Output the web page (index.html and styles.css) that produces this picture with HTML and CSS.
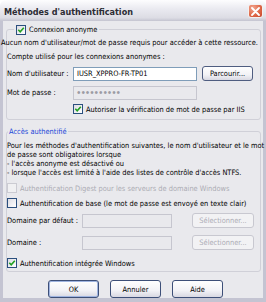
FILE: index.html
```html
<!DOCTYPE html>
<html lang="fr">
<head>
    <meta charset="UTF-8">
    <title>Méthodes d'authentification</title>
    <link rel="stylesheet" href="styles.css">
</head>
<body>
    <div class="window">
        <div class="titlebar">
            <span class="title">Méthodes d'authentification</span>
            <span class="close">
                <svg width="9" height="9" viewBox="0 0 9 9"><path d="M1 1L8 8M8 1L1 8" stroke="#fff" stroke-width="1.8" stroke-linecap="round"/></svg>
            </span>
        </div>
        <div class="client">
            <fieldset class="group anon">
                <legend>
                    <span class="box"><svg width="8" height="8" viewBox="0 0 8 8"><path d="M1.3 3.8L3.2 5.8L6.8 1.8" fill="none" stroke="#21a121" stroke-width="1.6"/></svg></span>
                    Connexion anonyme
                </legend>
                <div class="line wide">Aucun nom d'utilisateur/mot de passe requis pour accéder à cette ressource.</div>
                <div class="line">Compte utilisé pour les connexions anonymes :</div>
                <div class="row">
                    <span class="lbl">Nom d'utilisateur :</span>
                    <span class="field">IUSR_XPPRO-FR-TP01</span>
                    <span class="btn browse">Parcourir...</span>
                </div>
                <div class="row">
                    <span class="lbl">Mot de passe :</span>
                    <span class="field off"><span class="dots">••••••••••</span></span>
                </div>
                <div class="check iis">
                    <span class="box"><svg width="8" height="8" viewBox="0 0 8 8"><path d="M1.3 3.8L3.2 5.8L6.8 1.8" fill="none" stroke="#21a121" stroke-width="1.6"/></svg></span>
                    Autoriser la vérification de mot de passe par IIS
                </div>
            </fieldset>

            <fieldset class="group auth">
                <legend>Accès authentifié</legend>
                <p class="para">Pour les méthodes d'authentification suivantes, le nom d'utilisateur et le mot<br>
                de passe sont obligatoires lorsque<br>
                - l'accès anonyme est désactivé ou<br>
                - lorsque l'accès est limité à l'aide des listes de contrôle d'accès NTFS.</p>
                <div class="check digest disabled">
                    <span class="box"></span>
                    Authentification Digest pour les serveurs de domaine Windows
                </div>
                <div class="check basic">
                    <span class="box"></span>
                    Authentification de base (le mot de passe est envoyé en texte clair)
                </div>
                <div class="row domain first">
                    <span class="lbl">Domaine par défaut :</span>
                    <span class="field off"></span>
                    <span class="btn disabled">Sélectionner...</span>
                </div>
                <div class="row domain">
                    <span class="lbl">Domaine :</span>
                    <span class="field off"></span>
                    <span class="btn disabled">Sélectionner...</span>
                </div>
                <div class="check windows">
                    <span class="box"><svg width="8" height="8" viewBox="0 0 8 8"><path d="M1.3 3.8L3.2 5.8L6.8 1.8" fill="none" stroke="#21a121" stroke-width="1.6"/></svg></span>
                    Authentification intégrée Windows
                </div>
            </fieldset>

            <div class="buttons">
                <span class="btn default">OK</span>
                <span class="btn">Annuler</span>
                <span class="btn">Aide</span>
            </div>
        </div>
    </div>
</body>
</html>
```

FILE: styles.css
```css
* {
    box-sizing: border-box;
}
body {
    margin: 0;
    background-color: #fff;
    font-family: "DejaVu Sans Condensed", "Liberation Sans", sans-serif;
    font-size: 7.4px;
    color: #000;
}
.window {
    width: 266px;
    height: 302px;
    display: flex;
    flex-direction: column;
    overflow: hidden;
}
.titlebar {
    height: 21px;
    flex: none;
    display: flex;
    align-items: center;
    padding: 0 3px 0 4px;
    border-radius: 6px 6px 0 0;
    background: linear-gradient(#fdfdfe, #ebebf1 40%, #dcdce4 85%, #c4c4d0);
}
.title {
    flex: 1;
    font-size: 9px;
    font-weight: bold;
    color: #2c2c34;
    padding-top: 2px;
}
.close {
    width: 15px;
    height: 14px;
    margin-top: 1px;
    display: flex;
    align-items: center;
    justify-content: center;
    border: 1px solid #f4f0f0;
    border-radius: 3px;
    background: radial-gradient(circle at 30% 25%, #f2a58f, #df6a4a 55%, #c6452a);
}
.client {
    flex: 1;
    background-color: #e9e9ed;
    border: 3px solid #c4c4d2;
    border-top: 0;
    border-bottom-width: 4px;
}

/* group boxes */
.group {
    margin: 0 0 0 3px;
    width: 255px;
    padding: 0 0 5px 0;
    min-width: 0;
    border: 1px solid #d0d0d8;
    border-radius: 3px;
}
.group legend {
    height: 11px;
    line-height: 11px;
    display: flex;
    align-items: center;
}
.anon {
    margin-top: 3px;
}
.anon legend {
    margin-left: 7px;
    padding: 0 2px;
}
.auth {
    margin-top: 6px;
    padding-bottom: 3px;
}
.auth legend {
    margin-left: 1px;
    padding: 0 1px;
    color: #1c48d8;
}

/* lines of text and rows */
.line {
    height: 10px;
    line-height: 10px;
    margin-top: 4px;
    white-space: nowrap;
}
.wide {
    margin: 3px 0 0 -6px;
}
.row {
    height: 15px;
    margin-top: 4px;
    display: flex;
    align-items: center;
}
.lbl {
    width: 66px;
    white-space: nowrap;
}
.field {
    width: 124px;
    height: 14px;
    line-height: 12px;
    padding-left: 3px;
    border: 1px solid #7f9db9;
    background-color: #fff;
    white-space: nowrap;
}
.field.off {
    background-color: #e9e9ed;
    border-color: #c6c6cf;
}
.dots {
    font-family: "Liberation Sans", sans-serif;
    font-size: 10px;
    letter-spacing: 0.9px;
    color: #9c9ca4;
}
.btn {
    width: 51px;
    height: 15px;
    display: flex;
    align-items: center;
    justify-content: center;
    border: 1px solid #4f5d80;
    border-radius: 3px;
    background: linear-gradient(#fefefe, #f2f2f6 60%, #d8d8e2);
    white-space: nowrap;
}
.browse {
    margin-left: 5px;
}
.btn.disabled {
    color: #acacb4;
    border-color: #c8c8d0;
    background: #f2f2f4;
}

/* checkboxes */
.check {
    height: 10px;
    display: flex;
    align-items: center;
    white-space: nowrap;
}
.box {
    width: 10px;
    height: 10px;
    flex: none;
    margin-right: 3px;
    display: flex;
    align-items: center;
    justify-content: center;
    border: 1px solid #2b4f7e;
    background: linear-gradient(135deg, #dcdce4, #fff);
}
.iis {
    margin: 4px 0 0 66px;
}
.disabled .box {
    border-color: #cbcbd2;
    background: #f0f0f2;
}
.check.disabled {
    color: #acacb4;
}
.para {
    margin: 4px 0 0 0;
    line-height: 9px;
    white-space: nowrap;
}
.digest {
    margin-top: 6px;
}
.basic {
    margin-top: 5px;
}
.domain {
    margin-top: 7px;
}
.domain.first {
    margin-top: 5px;
}
.domain .lbl {
    width: 75px;
}
.domain .field {
    width: 90px;
    margin-right: 20px;
}
.domain .btn {
    width: 62px;
}
.windows {
    margin-top: 8px;
}

/* dialog buttons */
.buttons {
    margin: 8px 0 0 45px;
    display: flex;
    gap: 11px;
}
.buttons .btn {
    height: 18px;
    border-color: #3d4f78;
}
.buttons .default {
    box-shadow: inset 0 0 0 1px #9fb4e0;
}
```
